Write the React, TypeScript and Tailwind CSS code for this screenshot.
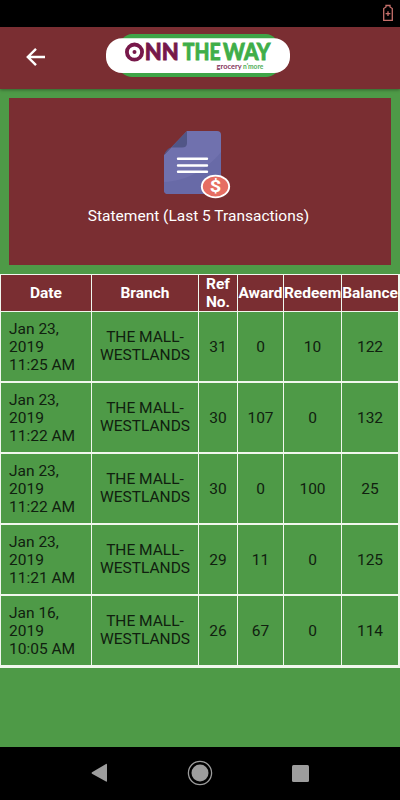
const rows = [
  ["Jan 23, 2019", "11:25 AM", "31", "0", "10", "122"],
  ["Jan 23, 2019", "11:22 AM", "30", "107", "0", "132"],
  ["Jan 23, 2019", "11:22 AM", "30", "0", "100", "25"],
  ["Jan 23, 2019", "11:21 AM", "29", "11", "0", "125"],
  ["Jan 16, 2019", "10:05 AM", "26", "67", "0", "114"],
];

const headings = ["Date", "Branch", "Ref No.", "Award", "Redeem", "Balance"];

const columns =
  "grid grid-cols-[90px_106px_38px_45px_57px_56px] gap-x-[1px] pl-[1px] bg-[#f1f7ee]";

function Logo() {
  return (
    <svg width="184" height="44" viewBox="106 34 184 44" className="shrink-0">
      <path d="M132 34H266Q271 34 276 39L280 55L276 73Q271 77 266 77H132Q127 77 122 73L118 55L122 39Q127 34 132 34Z" fill="#3fa548" />
      <rect x="106" y="38.3" width="184" height="34.7" rx="16" fill="#fff" />
      <circle cx="134.5" cy="52.1" r="7.6" fill="none" stroke="#77184a" strokeWidth="3.8" />
      <circle cx="134.5" cy="52" r="2" fill="#77184a" />
      <g fontFamily="Lato, sans-serif" fontWeight="900" fontSize="23.3" strokeWidth="0.8">
        <text x="144.8" y="60.3" textLength="34" lengthAdjust="spacingAndGlyphs" fill="#77184a" stroke="#77184a">NN</text>
        <text x="182.8" y="60.3" textLength="37.8" lengthAdjust="spacingAndGlyphs" fill="#3fae49" stroke="#3fae49">THE</text>
        <text x="223" y="60.3" textLength="47.5" lengthAdjust="spacingAndGlyphs" fill="#3fae49" stroke="#3fae49">WAY</text>
      </g>
      <g fontFamily="Lato, sans-serif" fontWeight="700" fontSize="7.5">
        <text x="216.6" y="68.6" textLength="25" lengthAdjust="spacingAndGlyphs" fill="#85345b">grocery</text>
        <text x="243" y="68.6" textLength="20.3" lengthAdjust="spacingAndGlyphs" fill="#4fae58">n'more</text>
      </g>
    </svg>
  );
}

function StatementIcon() {
  return (
    <svg width="68" height="68" viewBox="163 131 68 68">
      <path d="M187 131H217Q221 131 221 135V190Q221 194 217 194H168Q164 194 164 190V155Z" fill="#7071ae" />
      <path d="M221 152V190Q221 194 217 194H168Q164 194 164 190V182C188 181 207 169 221 152Z" fill="#686aa7" />
      <path d="M187 131V143Q187 147.500 182 147.500H171Q167 148 164 155Z" fill="#515687" />
      <path d="M178 158.800H207M178 165.500H207M178 171.700H207" stroke="#fff" strokeWidth="2.400" strokeLinecap="round" />
      <ellipse cx="215.500" cy="186.500" rx="14.600" ry="11.800" fill="#fff" />
      <ellipse cx="215.500" cy="186.500" rx="12.700" ry="10" fill="#e66e63" />
      <text x="215.500" y="192.300" textAnchor="middle" textLength="11.500" lengthAdjust="spacingAndGlyphs" fontFamily="Roboto, sans-serif" fontWeight="700" fontSize="16.500" fill="#fff">$</text>
    </svg>
  );
}

export default function App() {
  return (
    <div className="flex h-[800px] w-[400px] flex-col overflow-hidden bg-[#4e9a47] font-['Roboto',sans-serif]">
      <div className="flex h-[26.5px] shrink-0 justify-end bg-black pt-[4px] pr-[6px]">
        <svg width="12" height="18" viewBox="0 0 12 18" fill="none" stroke="#c5706b" strokeWidth="1.3">
          <path d="M4 3V1.500H8V3L10.300 4.500V16.300H1.700V4.500Z" />
          <path d="M6 7.200V12M3.600 9.600H8.400" />
        </svg>
      </div>
      <header className="flex h-[62.5px] shrink-0 items-start bg-[#7a2e32] shadow-[0_1px_3px_rgba(0,0,0,0.35)]">
        <svg width="20" height="20" viewBox="26 47 20 20" className="mt-[20.5px] ml-[26px] mr-[60px]" fill="none" stroke="#fff" strokeWidth="2.400">
          <path d="M45 57H28M36 48.800L27.800 57L36 65.200" />
        </svg>
        <div className="pt-[7.500px]">
          <Logo />
        </div>
      </header>
      <section className="mx-[9px] mt-[8.500px] flex h-[167px] shrink-0 flex-col items-center bg-[#7a2e32] pt-[33.500px]">
        <div className="mr-[6px]">
          <StatementIcon />
        </div>
        <h1 className="mt-[6px] mr-[3px] text-[15.500px] leading-[22px] whitespace-nowrap text-white">Statement (Last 5 Transactions)</h1>
      </section>
      <main className="mt-[9px] shrink-0 bg-[#f1f7ee] pr-[1px] pb-[1px]">
        <div className={columns + " h-[38px] pt-[1px] pb-[1.500px]"}>
          {headings.map((heading) => (
            <div key={heading} className="flex items-center justify-center bg-[#7a2e32] text-center text-[15.500px] leading-[18px] font-bold text-white">
              {heading}
            </div>
          ))}
        </div>
        {rows.map(([date, time, ...values], i) => (
          <div key={i} className={columns + " h-[71px] pb-[1.500px] text-[15.500px] leading-[18px] text-[#10200f]"}>
            <div className="flex flex-col justify-center bg-[#4e9a47] pt-[1px] pl-[8px]">
              <span className="w-[60px]">{date}</span>
              <span className="whitespace-nowrap">{time}</span>
            </div>
            <div className="flex items-center justify-center bg-[#4e9a47] text-center">
              THE MALL-
              <br />
              WESTLANDS
            </div>
            {values.map((value, j) => (
              <div key={j} className="flex items-center justify-center bg-[#4e9a47] pt-[1.500px]">
                {value}
              </div>
            ))}
          </div>
        ))}
      </main>
      <nav className="mt-auto flex h-[53.500px] shrink-0 items-center justify-between bg-black pr-[91.500px] pl-[90.500px]">
        <svg width="17" height="20" viewBox="0 0 17 20">
          <path d="M1 9.300L15 1Q16 .5 16 1.500V18Q16 19 15 18.500L1 10.700Q0 10 1 9.300Z" fill="#9d9d9d" />
        </svg>
        <svg width="26" height="26" viewBox="0 0 26 26">
          <circle cx="13" cy="13" r="11.600" fill="none" stroke="#9d9d9d" strokeWidth="1.300" />
          <circle cx="13" cy="13" r="8.500" fill="#9d9d9d" />
        </svg>
        <div className="size-[17px] rounded-[1.500px] bg-[#9d9d9d]" />
      </nav>
    </div>
  );
}
